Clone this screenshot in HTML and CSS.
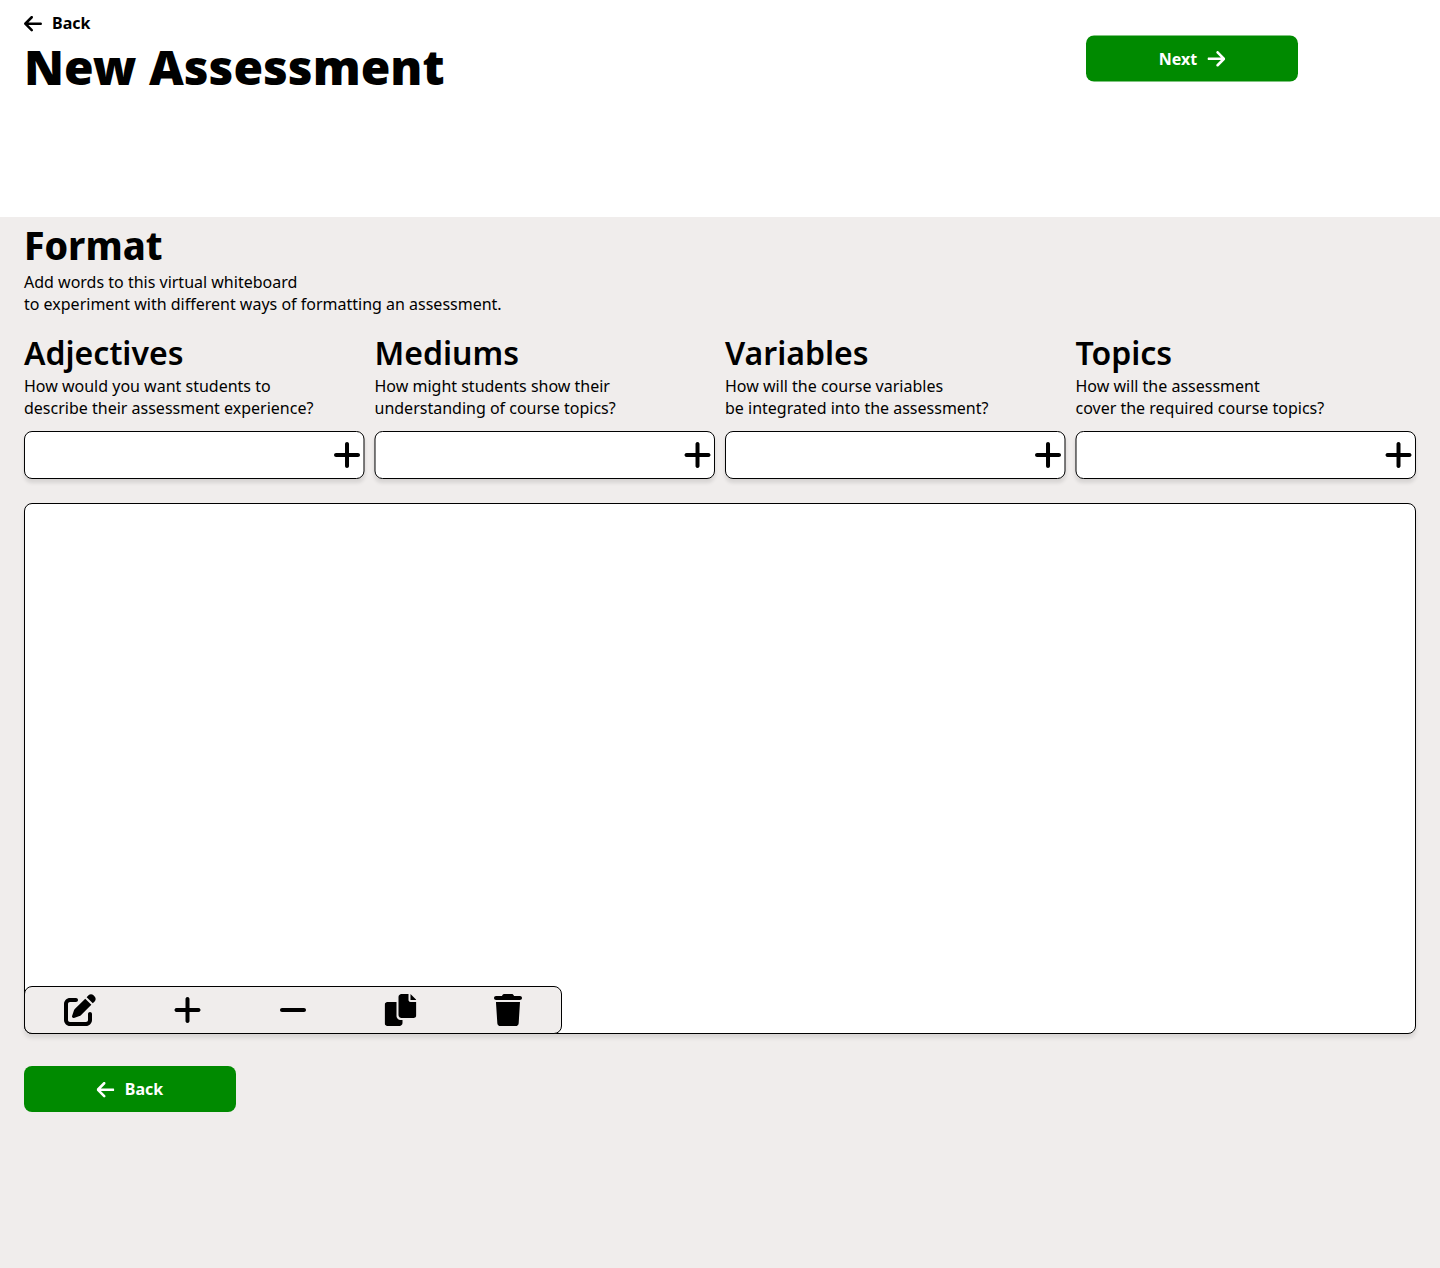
FILE: index.html
```html
<!DOCTYPE html>
<html lang="en">
<head>
<meta charset="utf-8">
<title>New Assessment</title>
<link rel="stylesheet" href="styles.css">
</head>
<body>
<svg class="sprite" aria-hidden="true">
  <symbol id="arrow-left" viewBox="0 0 448 512"><path d="M447.1 256C447.1 273.7 432.8 288 415.1 288H109.3l105.4 105.4c12.5 12.5 12.5 32.75 0 45.25C208.4 444.9 200.2 448 192 448s-16.38-3.125-22.62-9.375l-160-160c-12.5-12.5-12.5-32.75 0-45.25l160-160c12.5-12.5 32.75-12.5 45.25 0s12.5 32.75 0 45.25L109.3 224H416C433.7 224 447.1 238.3 447.1 256z"/></symbol>
  <symbol id="plus" viewBox="0 0 448 512"><path d="M256 80c0-17.7-14.3-32-32-32s-32 14.3-32 32V224H48c-17.7 0-32 14.3-32 32s14.3 32 32 32H192V432c0 17.7 14.3 32 32 32s32-14.3 32-32V288H400c17.7 0 32-14.3 32-32s-14.3-32-32-32H256V80z"/></symbol>
  <symbol id="minus" viewBox="0 0 448 512"><path d="M400 288h-352c-17.69 0-32-14.32-32-32.01s14.31-31.99 32-31.99h352c17.69 0 32 14.3 32 31.99S417.7 288 400 288z"/></symbol>
  <symbol id="edit" viewBox="0 0 512 512"><path d="M490.3 40.4C512.2 62.27 512.2 97.73 490.3 119.6L460.3 149.7 362.3 51.72 392.4 21.66C414.3-.2135 449.7-.2135 471.6 21.66L490.3 40.4zM172.4 241.7L339.7 74.34 437.7 172.3 270.3 339.6C264.2 345.8 256.7 350.4 248.4 353.2L159.6 382.8C150.1 385.6 141.5 383.4 135 376.1C128.6 370.5 126.4 361 129.2 352.4L158.8 263.6C161.6 255.3 166.2 247.8 172.4 241.7zM192 63.1C209.7 63.1 224 78.33 224 95.1 224 113.7 209.7 127.1 192 127.1H96C78.33 127.1 64 142.3 64 159.1V416C64 433.7 78.33 448 96 448H352C369.7 448 384 433.7 384 416V319.1C384 302.3 398.3 287.1 416 287.1 433.7 287.1 448 302.3 448 319.1V416C448 469 405 512 352 512H96C42.98 512 0 469 0 416V159.1C0 106.1 42.98 63.1 96 63.1H192z"/></symbol>
  <symbol id="copy" viewBox="0 0 512 512"><path d="M384 96L384 0h-112c-26.51 0-48 21.49-48 48v288c0 26.51 21.49 48 48 48H464c26.51 0 48-21.49 48-48V128h-95.1C398.4 128 384 113.6 384 96zM416 0v96h96L416 0zM192 352V128h-144c-26.51 0-48 21.49-48 48v288c0 26.51 21.49 48 48 48h192c26.51 0 48-21.49 48-48L288 416h-32C220.7 416 192 387.3 192 352z"/></symbol>
  <symbol id="trash" viewBox="0 0 448 512"><path d="M135.2 17.69C140.6 6.848 151.7 0 163.8 0H284.2C296.3 0 307.4 6.848 312.8 17.69L320 32H416C433.7 32 448 46.33 448 64C448 81.67 433.7 96 416 96H32C14.33 96 0 81.67 0 64C0 46.33 14.33 32 32 32H128L135.2 17.69zM394.8 466.1C393.2 492.3 372.3 512 346.9 512H101.1C75.75 512 54.77 492.3 53.19 466.1L31.1 128H416L394.8 466.1z"/></symbol>
</svg>

<header class="header">
  <div class="heading">
    <a class="back-link"><svg class="arrow"><use href="#arrow-left"/></svg>Back</a>
    <h1>New Assessment</h1>
  </div>
  <button class="btn btn-next" type="button">Next<svg class="arrow arrow-right"><use href="#arrow-left"/></svg></button>
</header>

<main class="main">
  <h2>Format</h2>
  <p>Add words to this virtual whiteboard<br>to experiment with different ways of formatting an assessment.</p>

  <div class="columns">
    <section>
      <h3>Adjectives</h3>
      <p>How would you want students to<br>describe their assessment experience?</p>
      <div class="entry"><input type="text" aria-label="Adjective"><svg class="icon narrow nudge-right"><use href="#plus"/></svg></div>
    </section>
    <section>
      <h3>Mediums</h3>
      <p>How might students show their<br>understanding of course topics?</p>
      <div class="entry entry-even"><input type="text" aria-label="Medium"><svg class="icon narrow nudge-right"><use href="#plus"/></svg></div>
    </section>
    <section>
      <h3>Variables</h3>
      <p>How will the course variables<br>be integrated into the assessment?</p>
      <div class="entry"><input type="text" aria-label="Variable"><svg class="icon narrow nudge-right"><use href="#plus"/></svg></div>
    </section>
    <section>
      <h3>Topics</h3>
      <p>How will the assessment<br>cover the required course topics?</p>
      <div class="entry entry-even"><input type="text" aria-label="Topic"><svg class="icon narrow nudge-right"><use href="#plus"/></svg></div>
    </section>
  </div>

  <div class="board">
    <div class="toolbar">
      <svg class="icon"><use href="#edit"/></svg>
      <svg class="icon narrow nudge-right"><use href="#plus"/></svg>
      <svg class="icon narrow"><use href="#minus"/></svg>
      <svg class="icon nudge-left"><use href="#copy"/></svg>
      <svg class="icon narrow"><use href="#trash"/></svg>
    </div>
  </div>

  <button class="btn btn-back" type="button"><svg class="arrow"><use href="#arrow-left"/></svg>Back</button>
</main>
</body>
</html>
```

FILE: styles.css
```css
* {
  box-sizing: border-box;
}

body {
  margin: 0;
  min-height: 1268px;
  display: flex;
  flex-direction: column;
  background: #fff;
  color: #000;
  font: 16px/22px "Noto Sans", sans-serif;
}

h1, h2, h3, p {
  margin: 0;
}

h1 {
  font-size: 48px;
  line-height: 66px;
  font-weight: 900;
}

h2 {
  padding-top: 1px;
  font-family: "Noto Sans Display", "Noto Sans", sans-serif;
  font-size: 40px;
  line-height: 53px;
  font-weight: 700;
}

h3 {
  font-size: 32px;
  line-height: 44px;
  font-weight: 600;
}

.sprite {
  display: none;
}

.header {
  display: flex;
  justify-content: space-between;
  align-items: flex-start;
  height: 217px;
  padding: 12px 142px 0 24px;
}

.back-link {
  display: flex;
  align-items: center;
  gap: 10px;
  font-weight: 700;
}

.arrow {
  width: 18px;
  height: 20.6px;
  fill: currentColor;
  transform: translateY(0.4px);
}

.arrow-right {
  transform: translateX(0.3px) scaleX(-1);
}

.btn-back .arrow {
  transform: translate(-0.5px, 0.4px);
}

.btn {
  display: flex;
  align-items: center;
  justify-content: center;
  gap: 10px;
  width: 212px;
  height: 46px;
  padding: 0;
  border: 0;
  border-radius: 8px;
  background: #008a00;
  color: #fff;
  font: 700 16px/22px "Noto Sans", sans-serif;
}

.btn-next {
  margin-top: 24px;
  transform: translateY(-0.5px);
}

.main {
  flex: 1;
  padding: 0 24px;
  background: #f0edec;
}

.columns {
  display: grid;
  grid-template-columns: repeat(4, 1fr);
  gap: 10px;
  margin-top: 16px;
}

.entry {
  display: flex;
  align-items: center;
  height: 48px;
  margin-top: 12px;
  padding-right: 3px;
  border: 1px solid #000;
  border-radius: 8px;
  background: #fff;
  box-shadow: 0 4px 4px rgba(0, 0, 0, 0.1);
  transform: scaleX(0.9985);
  transform-origin: left;
}

.entry-even {
  transform: translateX(-0.5px) scaleX(0.9985);
}

.entry input {
  flex: 1;
  min-width: 0;
  height: 100%;
  padding: 0 8px;
  border: 0;
  outline: 0;
  background: transparent;
  font: inherit;
}

.icon {
  flex: none;
  width: 32px;
  height: 32px;
}

.icon.narrow {
  width: 28px;
}

.nudge-right {
  transform: translateX(0.5px);
}

.nudge-left {
  transform: translateX(-0.5px);
}

.board {
  display: flex;
  align-items: flex-end;
  height: 531px;
  margin: 24px 0 32px;
  border: 1px solid #000;
  border-radius: 8px;
  background: #fff;
  box-shadow: 0 4px 4px rgba(0, 0, 0, 0.1);
}

.toolbar {
  display: flex;
  align-items: center;
  justify-content: space-around;
  width: 538px;
  height: 48px;
  margin: 0 0 -1px -1px;
  border: 1px solid #000;
  border-radius: 8px;
  background: #f0edec;
}
```
